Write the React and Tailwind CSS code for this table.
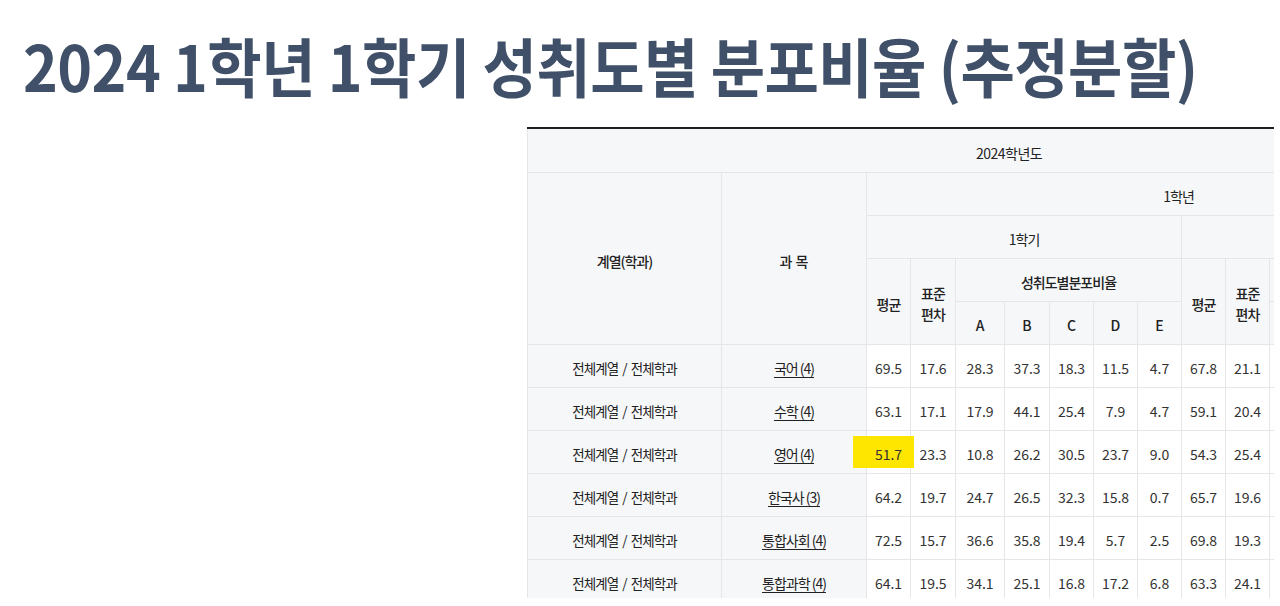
import React from "react";

const KR = { fontFamily: '"Noto Sans CJK KR", "Noto Sans", sans-serif' };

const rows = [
  ["국어 (4)", ["69.5", "17.6", "28.3", "37.3", "18.3", "11.5", "4.7", "67.8", "21.1"]],
  ["수학 (4)", ["63.1", "17.1", "17.9", "44.1", "25.4", "7.9", "4.7", "59.1", "20.4"]],
  ["영어 (4)", ["51.7", "23.3", "10.8", "26.2", "30.5", "23.7", "9.0", "54.3", "25.4"]],
  ["한국사 (3)", ["64.2", "19.7", "24.7", "26.5", "32.3", "15.8", "0.7", "65.7", "19.6"]],
  ["통합사회 (4)", ["72.5", "15.7", "36.6", "35.8", "19.4", "5.7", "2.5", "69.8", "19.3"]],
  ["통합과학 (4)", ["64.1", "19.5", "34.1", "25.1", "16.8", "17.2", "6.8", "63.3", "24.1"]],
];

const colW = [194, 145, 44, 45, 49, 45, 44, 44, 44, 44, 44, 44, 44, 44, 44, 45];

const th = "border border-[#e4e6ea] bg-[#f6f7f9] font-medium text-[#222] text-[14px] text-center align-middle pt-[6px] p-0";
const td = "border border-[#e4e6ea] bg-white text-[#333] text-[14px] text-center align-middle pt-[6px] p-0";
const ko = " tracking-[-1px]";

export default function App() {
  return (
    <div className="w-[1280px] h-[606px] bg-white overflow-hidden" style={KR}>
      <div className="pl-[23px] pt-[28px] h-[127px]">
        <h1 className="text-[64px] leading-[72px] font-bold text-[#405068] whitespace-nowrap origin-left scale-x-[0.924] tracking-[-0.01em]">
          2024 1학년 1학기 성취도별 분포비율 (추정분할)
        </h1>
      </div>
      <div className="ml-[527px] w-[747px] h-[471px] overflow-hidden relative border-t-2 border-[#1f1f1f]">
        <table className="table-fixed border-collapse w-[963px]">
          <colgroup>
            {colW.map((w, i) => (
              <col key={i} style={{ width: w }} />
            ))}
          </colgroup>
          <thead>
            <tr className="h-[43px]">
              <th colSpan={16} className={th + " font-normal border-t-0 tracking-[-0.5px]"}>2024학년도</th>
            </tr>
            <tr className="h-[43px]">
              <th rowSpan={4} className={th + ko}>계열(학과)</th>
              <th rowSpan={4} className={th}>과 목</th>
              <th colSpan={14} className={th + " font-normal" + ko}>1학년</th>
            </tr>
            <tr className="h-[43px]">
              <th colSpan={7} className={th + " font-normal" + ko}>1학기</th>
              <th colSpan={7} className={th + " font-normal" + ko}>2학기</th>
            </tr>
            <tr className="h-[43px]">
              <th rowSpan={2} className={th + ko}>평균</th>
              <th rowSpan={2} className={th + " leading-[21px]" + ko}>표준<br />편차</th>
              <th colSpan={5} className={th + ko}>성취도별분포비율</th>
              <th rowSpan={2} className={th + ko}>평균</th>
              <th rowSpan={2} className={th + " leading-[21px]" + ko}>표준<br />편차</th>
              <th colSpan={5} className={th + ko}>성취도별분포비율</th>
            </tr>
            <tr className="h-[43px]">
              {["A", "B", "C", "D", "E"].map((l) => (
                <th key={l} className={th}>{l}</th>
              ))}
              {["A", "B", "C", "D", "E"].map((l) => (
                <th key={"2" + l} className={th}>{l}</th>
              ))}
            </tr>
          </thead>
          <tbody>
            {rows.map(([subj, vals], ri) => (
              <tr key={ri} className="h-[43px]">
                <th className={th + " font-normal"}>
                  <span className="text-[13.5px] tracking-[-0.9px]">
                    전체계열<span className="mx-[4px]">/</span>전체학과
                  </span>
                </th>
                <th className={th + " font-normal" + ko}>
                  <span className="underline underline-offset-[3px]">{subj}</span>
                </th>
                {vals.map((v, i) => (
                  <td key={i} className={td}>
                    <span className="relative z-[2]">{v}</span>
                  </td>
                ))}
                {[0, 1, 2, 3, 4].map((i) => (
                  <td key={"x" + i} className={td}>-</td>
                ))}
              </tr>
            ))}
          </tbody>
        </table>
        <div className="absolute z-[1] left-[326px] top-[307px] w-[61px] h-[32px] bg-[#ffe600]" />
      </div>
    </div>
  );
}
